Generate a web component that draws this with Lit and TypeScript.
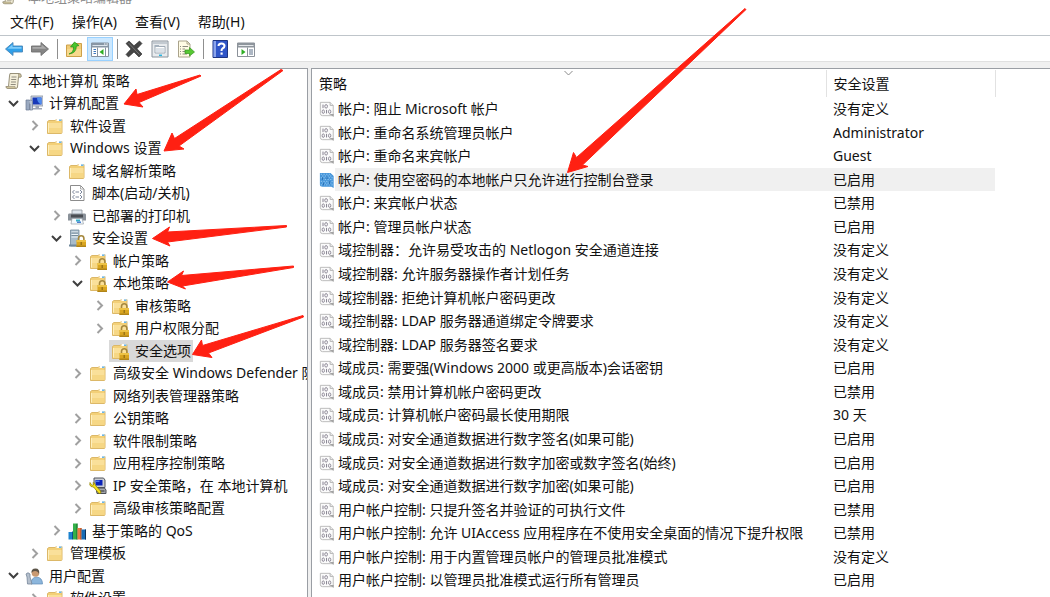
import { LitElement, html, svg, css } from "lit";
import { customElement, property, state } from "lit/decorators.js";
import { classMap } from "lit/directives/class-map.js";

const folderShape = svg`
  <path d="M1.5 4.5 L3 3.5 H9 L10 2.5 H16 V15.5 Q16 16.5 15 16.5 H1.5 Z" fill="#f3d078" stroke="#dcb868" stroke-width="1"/>
  <path d="M10.5 2 H15.5 V4 H10.5 Z" fill="#fff"/><path d="M13 2.5 H15.5 V3.8 H13 Z" fill="#4aa3df"/>
  <path d="M2 6 H15.5 V16 H2 Z" fill="#fae09a"/><path d="M2 11 H15.5 V16 H2 Z" fill="#f4d078" opacity=".6"/>
  <path d="M2.5 6 V15.500" stroke="#fff0bd"/>`;

const lockShape = svg`
  <path d="M10.500 12 V9.500 a2.700 2.700 0 0 1 5.400 0 V12" fill="none" stroke="#a5873c" stroke-width="1.600"/>
  <path d="M8.500 11 H18 V18 H8.500 Z" fill="#d9a520"/><path d="M8.500 11 H18 V13 H8.500 Z" fill="#edc244"/>
  <path d="M8.500 16.500 H18 V18 H8.500 Z" fill="#b08418"/>
  <path d="M13.200 13 V16" stroke="#8e6a14" stroke-width="1.200"/>`;

const glyphs: Record<string, unknown> = {
  folder: folderShape,
  lockfolder: svg`${folderShape}${lockShape}`,
  scroll: svg`
    <path d="M5 1.500 H14.500 Q16 1.500 16 3.500 V5 H13.500 L12.500 15 Q12.500 16.500 10.500 16.500 H3 Q1 16.500 1 14.500 H3.500 L4.500 4 Z" fill="#f4efda" stroke="#98917a"/>
    <path d="M13.500 2 Q16 1.500 16 3.500 V5 H13.500 Z M1 14.500 H10 Q10 16.500 11 16.500 H3 Q1 16.500 1 14.500" fill="#cfc39a" stroke="#98917a" stroke-width=".6"/>
    <path d="M6.500 5 H11.500 M6.200 7.500 H11.200 M6 10 H11 M5.700 12.500 H10.700" stroke="#8f8b7e"/>`,
  computer: svg`
    <path d="M6 2 H18 V12 H6 Z" fill="#d5dae2" stroke="#8790a0" stroke-width=".8"/>
    <path d="M7.500 3.500 H16.500 V10.500 H7.500 Z" fill="#1638b8"/><path d="M12 3.500 H16.500 V10.500 Q12 9 12 3.500" fill="#4f8df0"/>
    <path d="M10.500 12 H14 V14 H17 V15.500 H8 V14 H10.500 Z" fill="#9ba4b4"/>
    <path d="M1 6 H4.500 V16 H1 Z" fill="#9aa9c0" stroke="#68778f" stroke-width=".7"/>
    <path d="M4 6.500 Q8 5 7.500 9 V16 H5 V10" fill="#b8c4d6" stroke="#6d7c94" stroke-width=".7"/>`,
  script: svg`
    <path d="M2.500 1.500 H12.500 L16 5 V16.500 H2.500 Z" fill="#fff" stroke="#8c8c8c"/>
    <path d="M12.500 1.500 V5 H16" fill="none" stroke="#aaa"/>
    <path d="M6.500 6 L4.500 8 L6.500 10 M12 6 L14 8 L12 10 M7.500 8 H11 M6.500 11 L4.500 13 L6.500 15 M12 11 L14 13 L12 15 M7.500 13 H11" fill="none" stroke="#6d7890" stroke-width=".9"/>`,
  printer: svg`
    <path d="M4 3 H14 V8 H4 Z" fill="#dfe6ee" stroke="#8e959d" stroke-width=".8"/>
    <path d="M1 6.500 H17 Q18 6.500 18 8 V13.500 H0 V8 Q0 6.500 1 6.500" fill="#8a9199"/>
    <path d="M3 7.500 H15 V10.500 H3 Z" fill="#4a4e54"/>
    <path d="M4 11.500 H14 L15.500 17 H3 Z" fill="#f4fbff" stroke="#9aa0a8" stroke-width=".7"/>
    <path d="M8 12.500 H12 V14.500 H8 Z" fill="#35b0c8"/><path d="M9 14.500 H13 V16 H9 Z" fill="#4d7fd0"/>`,
  server: svg`
    <path d="M2.500 1 H11 V17 H2.500 Z" fill="#a8bccb" stroke="#72899b" stroke-width=".8"/>
    <path d="M3.500 3 H10 M3.500 5.500 H10 M3.500 8 H10" stroke="#edf4f8"/><path d="M3.500 4 H10 M3.500 6.500 H10" stroke="#5f7688" stroke-width=".7"/>
    <path d="M1 15.500 H10 V17.500 H1 Z" fill="#71899c"/>${lockShape}`,
  ipsec: svg`
    <path d="M5 1 H14.500 L16 3 V10.500 H5 Z" fill="#c9cdd3" stroke="#53575f"/>
    <path d="M6.500 3 H13.500 V8.500 H6.500 Z" fill="#0a22b8"/><path d="M7 3.500 H10.500 V5 H7 Z" fill="#4c7af2"/>
    <path d="M7 11 H15.500 L17 13 V16.500 H8 Z" fill="#a5a8ae" stroke="#4c4f55"/><path d="M11 14 H15.500" stroke="#2a2c30"/>
    <path d="M1 5.500 Q0 8 2 9.500 L4.500 10 L10 16.500 L12 16 L11.500 14 L6.500 8.500 Q6.500 6 4 5.500 L4.500 8 L2.800 8.200 Z" fill="#f6e11c" stroke="#8b7d00" stroke-width=".7"/>`,
  chart: svg`
    <path d="M0.500 10 H5 V17.500 H0.500 Z" fill="#1c83cf"/><path d="M4 10 L5 9 V17 L4 17.500 Z" fill="#0d4d8b"/>
    <path d="M5 1.500 H9.500 V17.500 H5 Z" fill="#34b04a"/><path d="M8.500 2 L9.500 1.500 V17.500 H8.500 Z" fill="#126b25"/>
    <path d="M9.500 6 H13.500 V17.500 H9.500 Z" fill="#ee7c45"/><path d="M12.500 6 H13.500 V17.500 H12.500 Z" fill="#a2461d"/>
    <path d="M13.500 7.500 H18 V17.500 H13.500 Z" fill="#176bb4"/><path d="M17 7.500 H18 V17.500 H17 Z" fill="#0b315b"/>`,
  user: svg`
    <path d="M6 17 Q6 10.500 11.500 10 Q17.500 10.500 17.500 17 Z" fill="#8cb6dc" stroke="#5e8ab4" stroke-width=".7"/>
    <circle cx="10.500" cy="6" r="3.800" fill="#c99a72"/><path d="M6.500 6 Q6 1.500 10.500 1.500 Q15 1.500 14 7 Q13 4 10 4 Q7.500 4 6.500 6" fill="#5b5347"/>
    <path d="M1 7 Q3 4.500 5 7 V10 L7 17 H2.500 L2 10 Z" fill="#b4bfcc" stroke="#76869a" stroke-width=".8"/>`,
  policy: svg`
    <path d="M1.500 1.500 H12.500 L16 5 V16.500 H4 Q1.500 16.500 1.500 14 Z" fill="#fbfbfb" stroke="#b5b5b5"/>
    <path d="M12.500 1.500 V5 H16" fill="#eee" stroke="#b0b0b0"/><path d="M11 14.500 H16.500 V18 L14 16 Z" fill="#a3a3a3"/>
    <path d="M4.500 4 V8" stroke="#84808e" stroke-width="1.100"/><ellipse cx="8" cy="6" rx="1.500" ry="2" fill="none" stroke="#84808e"/>
    <ellipse cx="4.800" cy="12" rx="1.300" ry="2" fill="none" stroke="#84808e"/><path d="M8.500 10 V14" stroke="#84808e" stroke-width="1.100"/><ellipse cx="12" cy="12" rx="1.300" ry="2" fill="none" stroke="#84808e"/>`,
  policyOn: svg`
    <path d="M1 1 H13 L16.500 4.500 V18 L14 16.500 H4 Q1 16.500 1 14 Z" fill="#4595da"/>
    <path d="M2 2.500 H13 M2 6.500 H16 M2 10.500 H16 M2 14.500 H16" stroke="#9ccdf3" stroke-dasharray="1.500 1.500"/>
    <path d="M3.500 4.500 H14 M3.500 8.500 H16 M3.500 12.500 H16" stroke="#9ccdf3" stroke-dasharray="1.500 1.500"/>
    <path d="M4 6 V9 M9 5 V8 M5 12 V15 M12 10 V14" stroke="#2268ae"/>`,
  back: svg`<path d="M0.500 9 L8 2.500 V6 H17.500 V12 H8 V15.500 Z" fill="#2fa0ea" stroke="#4b87b8" stroke-width=".9"/><path d="M2.500 8.700 L7.500 4.500 V7 H16.500 V8.700 Z" fill="#7ecbfa"/>`,
  forward: svg`<path d="M17.500 9 L10 2.500 V6 H0.500 V12 H10 V15.500 Z" fill="#858585" stroke="#707070" stroke-width=".9"/><path d="M15.500 8.700 L10.500 4.500 V7 H1.500 V8.700 Z" fill="#aaa"/>`,
  up: svg`<path d="M1.500 5 H7 L8.500 3.500 H16.500 V16.500 H1.500 Z" fill="#f1cc76" stroke="#cda04a"/><path d="M2 9 H16 V16 H2 Z" fill="#f7d98d"/>
    <path d="M4 14 Q9 12 8.500 7 L5.500 7 L9.500 2 L14 5.500 L11.300 6.200 Q11.500 13 4 14" fill="#49c52d" stroke="#238e17" stroke-width=".7"/>`,
  tree: svg`<path d="M0.500 3 H17.500 V16.500 H0.500 Z" fill="#fff" stroke="#8592a0"/><path d="M0.500 3 H17.500 V7.500 H0.500 Z" fill="#8896a5"/><path d="M1.500 5.500 H16.500" stroke="#dce4ec"/><path d="M13 4 H17" stroke="#fff" stroke-dasharray="1 .6"/>
    <path d="M2.500 9.500 H5 M2.500 11.500 H5 M2.500 13.500 H5" stroke="#3c78be"/><path d="M6.500 7.500 V16.500 M14.500 7.500 V16.500" stroke="#8592a0"/><path d="M12.500 9 V15 L8.500 12 Z" fill="#2fae24"/>`,
  remove: svg`<path d="M1 3.500 L4 1 L9 5.800 L14.500 1 L17 3.500 L12 8.800 L17 14 L14 17 L9 12 L3.500 17 L1 14.500 L6 9 Z" fill="#454545" stroke="#2e2e2e" stroke-width=".6"/><path d="M3.500 3 L14.500 14.500" stroke="#767676"/>`,
  props: svg`<path d="M1 1 H17 V17 H1 Z" fill="#e8ebee" stroke="#8a939c"/><path d="M2 3 H16" stroke="#c3cad1" stroke-width="2"/><path d="M4 6.500 H14 V13 H4 Z" fill="#fff" stroke="#a0abb6"/><path d="M5 9 H13 M5 11 H13" stroke="#b8c5d1"/><path d="M3.500 6 H8" stroke="#a5b1bd" stroke-width="2"/><path d="M8 15.300 H11" stroke="#27b4e0" stroke-width="1.500"/>`,
  export: svg`<path d="M1.500 1 H10 L13 4 V17 H1.500 Z" fill="#fffbe5" stroke="#aaa38b"/><path d="M10 1 V4 H13" fill="none" stroke="#aaa38b"/><path d="M3 6.500 H4 M5.500 6.500 H11 M3 9 H4 M5.500 9 H8 M3 11.500 H4 M5.500 11.500 H8 M3 14 H4 M5.500 14 H10" stroke="#8d8b80"/>
    <path d="M8 10 H12.500 V7.500 L17.500 12 L12.500 16 V13.500 H8 Z" fill="#57c833" stroke="#35941d" stroke-width=".7"/>`,
  help: svg`<path d="M2 0.500 H16.500 V17.500 H2 Z" fill="#2f55c8" stroke="#1d3482"/><path d="M2.500 1 H5 V17 H2.500 Z" fill="#8aa3ea"/><path d="M7.500 6 Q7.500 3.500 10.500 3.500 Q13.500 3.500 13.500 6 Q13.500 7.500 11.500 8.500 Q10.500 9.200 10.500 11" fill="none" stroke="#fff" stroke-width="2"/><path d="M9.500 12.500 H11.700 V14.700 H9.500 Z" fill="#fff"/>`,
  action: svg`<path d="M0.500 3 H17.500 V16.500 H0.500 Z" fill="#fff" stroke="#8b9199"/><path d="M0.500 3 H17.500 V7.500 H0.500 Z" fill="#8e959c"/><path d="M1.500 5.500 H16.500" stroke="#e4e7ea"/><path d="M4.500 9 V15 L8.500 12 Z" fill="#2fae24"/><path d="M10.500 7.500 V16.500" stroke="#8b9199"/><path d="M12 10 H16 M12 12 H16 M12 14 H16" stroke="#5a6f88"/>`,
};

const icon = (name: string) =>
  html`<svg class="icon" viewBox="0 0 18 18" aria-hidden="true">${glyphs[name]}</svg>`;

interface Node {
  text: string;
  icon: string;
  level: number;
  mark?: "open" | "closed";
}

const nodes: Node[] = [
  { text: "本地计算机 策略", icon: "scroll", level: 0 },
  { text: "计算机配置", icon: "computer", level: 1, mark: "open" },
  { text: "软件设置", icon: "folder", level: 2, mark: "closed" },
  { text: "Windows 设置", icon: "folder", level: 2, mark: "open" },
  { text: "域名解析策略", icon: "folder", level: 3, mark: "closed" },
  { text: "脚本(启动/关机)", icon: "script", level: 3 },
  { text: "已部署的打印机", icon: "printer", level: 3, mark: "closed" },
  { text: "安全设置", icon: "server", level: 3, mark: "open" },
  { text: "帐户策略", icon: "lockfolder", level: 4, mark: "closed" },
  { text: "本地策略", icon: "lockfolder", level: 4, mark: "open" },
  { text: "审核策略", icon: "lockfolder", level: 5, mark: "closed" },
  { text: "用户权限分配", icon: "lockfolder", level: 5, mark: "closed" },
  { text: "安全选项", icon: "lockfolder", level: 5 },
  { text: "高级安全 Windows Defender 防火墙", icon: "folder", level: 4, mark: "closed" },
  { text: "网络列表管理器策略", icon: "folder", level: 4 },
  { text: "公钥策略", icon: "folder", level: 4, mark: "closed" },
  { text: "软件限制策略", icon: "folder", level: 4, mark: "closed" },
  { text: "应用程序控制策略", icon: "folder", level: 4, mark: "closed" },
  { text: "IP 安全策略，在 本地计算机", icon: "ipsec", level: 4, mark: "closed" },
  { text: "高级审核策略配置", icon: "folder", level: 4, mark: "closed" },
  { text: "基于策略的 QoS", icon: "chart", level: 3, mark: "closed" },
  { text: "管理模板", icon: "folder", level: 2, mark: "closed" },
  { text: "用户配置", icon: "user", level: 1, mark: "open" },
  { text: "软件设置", icon: "folder", level: 2, mark: "closed" },
];

const policies: [string, string][] = [
  ["帐户: 阻止 Microsoft 帐户", "没有定义"],
  ["帐户: 重命名系统管理员帐户", "Administrator"],
  ["帐户: 重命名来宾帐户", "Guest"],
  ["帐户: 使用空密码的本地帐户只允许进行控制台登录", "已启用"],
  ["帐户: 来宾帐户状态", "已禁用"],
  ["帐户: 管理员帐户状态", "已启用"],
  ["域控制器：允许易受攻击的 Netlogon 安全通道连接", "没有定义"],
  ["域控制器: 允许服务器操作者计划任务", "没有定义"],
  ["域控制器: 拒绝计算机帐户密码更改", "没有定义"],
  ["域控制器: LDAP 服务器通道绑定令牌要求", "没有定义"],
  ["域控制器: LDAP 服务器签名要求", "没有定义"],
  ["域成员: 需要强(Windows 2000 或更高版本)会话密钥", "已启用"],
  ["域成员: 禁用计算机帐户密码更改", "已禁用"],
  ["域成员: 计算机帐户密码最长使用期限", "30 天"],
  ["域成员: 对安全通道数据进行数字签名(如果可能)", "已启用"],
  ["域成员: 对安全通道数据进行数字加密或数字签名(始终)", "已启用"],
  ["域成员: 对安全通道数据进行数字加密(如果可能)", "已启用"],
  ["用户帐户控制: 只提升签名并验证的可执行文件", "已禁用"],
  ["用户帐户控制: 允许 UIAccess 应用程序在不使用安全桌面的情况下提升权限", "已禁用"],
  ["用户帐户控制: 用于内置管理员帐户的管理员批准模式", "没有定义"],
  ["用户帐户控制: 以管理员批准模式运行所有管理员", "已启用"],
];

const base = css`
  * { box-sizing: border-box; }
  button { border: 0; margin: 0; padding: 0; background: none; font: inherit; color: inherit; }
  .icon { display: block; flex: none; width: 18px; height: 18px; }
`;

@customElement("menu-bar")
class MenuBar extends LitElement {
  static styles = [base, css`
    :host { display: flex; height: 27px; padding-left: 1px; align-items: center; }
    button { padding: 0 9px; line-height: 20px; }
  `];
  render() {
    return ["文件(F)", "操作(A)", "查看(V)", "帮助(H)"].map((t) => html`<button type="button">${t}</button>`);
  }
}

@customElement("tool-bar")
class ToolBar extends LitElement {
  static styles = [base, css`
    :host { display: flex; height: 25px; padding: 0 1px; align-items: center; }
    button { display: grid; place-items: center; width: 26px; height: 24px; }
    .pressed { background: #cce8ff; border: 1px solid #99d1ff; }
    .sep { width: 8px; height: 20px; display: flex; justify-content: center; }
    .sep::before { content: ""; width: 1px; background: #8f8f8f; }
  `];
  private items: [string, string][] = [
    ["back", "后退"], ["forward", "前进"], ["", ""], ["up", "上一级"], ["tree", "显示/隐藏控制台树"], ["", ""],
    ["remove", "删除"], ["props", "属性"], ["export", "导出列表"], ["", ""], ["help", "帮助"], ["action", "显示/隐藏操作窗格"],
  ];
  render() {
    return this.items.map(([name, label]) => name
      ? html`<button type="button" aria-label=${label} class=${classMap({ pressed: name === "tree" })}>${icon(name)}</button>`
      : html`<span class="sep"></span>`);
  }
}

@customElement("policy-tree")
class PolicyTree extends LitElement {
  @state() private selected = 12;
  static styles = [base, css`
    :host { display: block; overflow: hidden; background: #fff; }
    ul { list-style: none; margin: 0; padding: 0; }
    li { display: flex; height: 23px; align-items: center; }
    li:nth-child(even) { height: 22px; }
    .l0 { padding-left: 3px; }
    .l1 { padding-left: 4px; }
    .l2 { padding-left: 25px; }
    .l3 { padding-left: 47px; }
    .l4 { padding-left: 68px; }
    .l5 { padding-left: 90px; }
    .mark { flex: none; display: grid; place-items: center; width: 19px; }
    .mark svg { width: 11px; height: 11px; fill: none; stroke: #a0a0a0; stroke-width: 2; }
    .mark .open { stroke: #404040; }
    .item { display: flex; align-items: center; gap: 6px; height: 22px; padding: 0 2px; white-space: nowrap; }
    .l0 .item { gap: 5px; }
    .selected { background: #d9d9d9; }
  `];
  private mark(kind?: string) {
    return html`<span class="mark">${kind
      ? html`<svg class=${kind} viewBox="0 0 11 11"><path d=${kind === "open" ? "M1 3 L5.500 7.500 L10 3" : "M3.500 1 L8 5.500 L3.500 10"}/></svg>`
      : ""}</span>`;
  }
  render() {
    return html`<ul role="tree">${nodes.map((n, i) => html`
      <li class="l${n.level}" role="treeitem" aria-level=${n.level + 1}>
        ${n.level ? this.mark(n.mark) : ""}
        <button type="button" class=${classMap({ item: true, selected: i === this.selected })} @click=${() => (this.selected = i)}>${icon(n.icon)}<span>${n.text}</span></button>
      </li>`)}</ul>`;
  }
}

@customElement("policy-list")
class PolicyList extends LitElement {
  @state() private selected = 3;
  static styles = [base, css`
    :host { display: block; overflow: hidden; background: #fff; }
    table { width: 100%; table-layout: fixed; border-collapse: collapse; margin-top: 1px; }
    th, td { padding: 0 7px; text-align: left; font-weight: 400; white-space: nowrap; line-height: 20px; }
    th { position: relative; height: 27px; border-right: 1px solid #e2e2e2; }
    th:last-child { border: 0; }
    .policy { width: 514px; }
    .setting { width: 169px; }
    tbody tr { height: 24px; }
    tbody tr:nth-child(7n + 2), tbody tr:nth-child(7n + 4), tbody tr:nth-child(7n + 6) { height: 23px; }
    .name { display: flex; align-items: center; gap: 3px; }
    .name .icon { width: 16px; }
    .selected td:first-child { background: linear-gradient(#f0f0f0, #f0f0f0) 23px 0 no-repeat; }
    .selected td:nth-child(2) { background: #f0f0f0; }
    .sort { position: absolute; top: 0; left: 0; right: 0; margin: 0 auto; width: 9px; height: 6px; fill: none; stroke: #8a8a8a; }
  `];
  render() {
    return html`<table>
      <thead><tr>
        <th class="policy">策略<svg class="sort" viewBox="0 0 9 6"><path d="M0.500 1 L4.500 5 L8.500 1"/></svg></th>
        <th class="setting">安全设置</th><th></th>
      </tr></thead>
      <tbody>${policies.map(([name, value], i) => html`
        <tr class=${classMap({ selected: i === this.selected })} @click=${() => (this.selected = i)}>
          <td><span class="name">${icon(i === this.selected ? "policyOn" : "policy")}<span>${name}</span></span></td>
          <td>${value}</td><td></td>
        </tr>`)}</tbody>
    </table>`;
  }
}

@customElement("arrow-marks")
class ArrowMarks extends LitElement {
  @property({ type: Array }) shapes: string[] = [
    "124,104 136,89 137,94.500 200,75 201,76 139,102.500 143,107",
    "164,151 172,133 174.500,138.500 281,69.500 283,70.500 179,146 184,149",
    "152.500,238.500 169.500,227 167.500,232 286.500,225.500 286.500,227 167.500,242 170,246",
    "167.500,282 183.500,271 181.500,275.500 293.500,266 293.500,267.500 182.500,286 185.500,289",
    "192.500,354.500 201.500,340 202.500,345.500 303,315.500 303.500,317 208.500,353 212,357.500",
    "567.500,172.500 573.500,152.500 576.500,157.500 745,8.500 746,9.500 582.500,165 588,166.500",
  ];
  static styles = css`
    :host { position: absolute; top: 0; left: 0; pointer-events: none; }
    svg { display: block; width: 760px; height: 370px; fill: #ff2012; stroke: #ff2012; stroke-width: 1; stroke-linejoin: round; }
  `;
  render() {
    return html`<svg viewBox="0 0 760 370" aria-hidden="true">${this.shapes.map((p) => svg`<polygon points=${p}/>`)}</svg>`;
  }
}

@customElement("app-root")
class AppRoot extends LitElement {
  static styles = [base, css`
    :host {
      display: flex; flex-direction: column; position: relative; height: 100vh; overflow: hidden;
      background: #fff; color: #111;
      font: 14px/20px "Noto Sans", "Noto Sans CJK SC", sans-serif;
    }
    .title { flex: none; display: flex; align-items: flex-end; gap: 9px; height: 5px; padding-left: 1px; color: #8c8c8c; overflow: hidden; font-size: 13px; line-height: 16px; }
    .title .icon { height: 16px; }
    menu-bar { flex: none; margin-top: 4px; border-bottom: 1px solid #bfc5ca; }
    tool-bar { flex: none; margin-top: 1px; border-bottom: 1px solid #e0e0e0; }
    .panes { flex: 1; min-height: 0; display: grid; grid-template-columns: 308px minmax(0, 1fr); gap: 3px; padding-top: 6px; background: #f0f0f0; }
    policy-tree { border: solid #9a9ea4; border-width: 1px 1px 0 0; }
    policy-list { border: solid #9a9ea4; border-width: 1px 0 0 1px; }
  `];
  render() {
    return html`
      <header class="title">${icon("scroll")}<span>本地组策略编辑器</span></header>
      <menu-bar></menu-bar>
      <tool-bar></tool-bar>
      <main class="panes"><policy-tree></policy-tree><policy-list></policy-list></main>
      <arrow-marks></arrow-marks>`;
  }
}
